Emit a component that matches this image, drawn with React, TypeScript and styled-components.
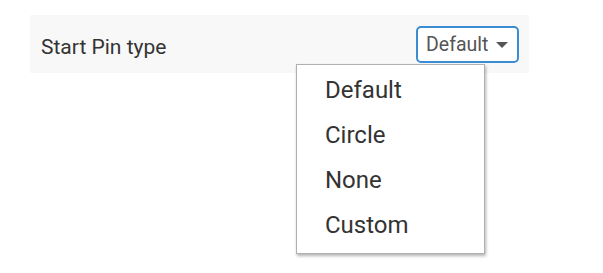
import styled, { createGlobalStyle } from 'styled-components';

const options = ['Default', 'Circle', 'None', 'Custom'];

function App() {
  return (
    <>
      <GlobalStyle />
      <Page>
        <SettingRow>
          <Label>Start Pin type</Label>
          <SelectWrap>
            <SelectButton type="button">
              Default
              <Caret />
            </SelectButton>
            <Menu>
              {options.map((o) => (
                <MenuItem key={o}>{o}</MenuItem>
              ))}
            </Menu>
          </SelectWrap>
        </SettingRow>
      </Page>
    </>
  );
}

const GlobalStyle = createGlobalStyle`
  html, body, #root {
    height: 100%;
  }
  body {
    margin: 0;
    background: #ffffff;
    font-family: Roboto, "Noto Sans", sans-serif;
  }
`;

const Page = styled.main`
  min-height: 273px;
  box-sizing: border-box;
  padding: 15px 0 0 30px;
`;

const SettingRow = styled.section`
  width: 499px;
  height: 58px;
  box-sizing: border-box;
  background-color: #f8f8f8;
  display: flex;
  align-items: center;
  justify-content: space-between;
  padding: 0 10px 0 11px;
`;

const Label = styled.span`
  font-size: 21px;
  color: #333333;
  margin-top: 5px;
`;

const SelectWrap = styled.div`
  position: relative;
`;

const SelectButton = styled.button`
  width: 103px;
  height: 37px;
  box-sizing: border-box;
  border: 2px solid #3a8dd3;
  border-radius: 5px;
  background: #ffffff;
  display: flex;
  align-items: center;
  gap: 8px;
  padding: 0 0 0 8px;
  font-family: Roboto, sans-serif;
  font-size: 19.5px;
  color: #555555;
  cursor: pointer;
`;

const Caret = styled.span`
  width: 0;
  height: 0;
  border-left: 6.5px solid transparent;
  border-right: 6.5px solid transparent;
  border-top: 6px solid #555555;
  margin-top: 2px;
`;

const Menu = styled.ul`
  position: absolute;
  top: calc(100% + 1px);
  left: -120px;
  width: 189px;
  box-sizing: border-box;
  margin: 0;
  padding: 3px 0 5px;
  list-style: none;
  background: #ffffff;
  border: 1px solid #b0b0b0;
  box-shadow: 1px 2px 3px rgba(0, 0, 0, 0.3);
`;

const MenuItem = styled.li`
  height: 45px;
  line-height: 45px;
  padding-left: 28px;
  font-size: 24px;
  color: #333333;
`;

export default App;
